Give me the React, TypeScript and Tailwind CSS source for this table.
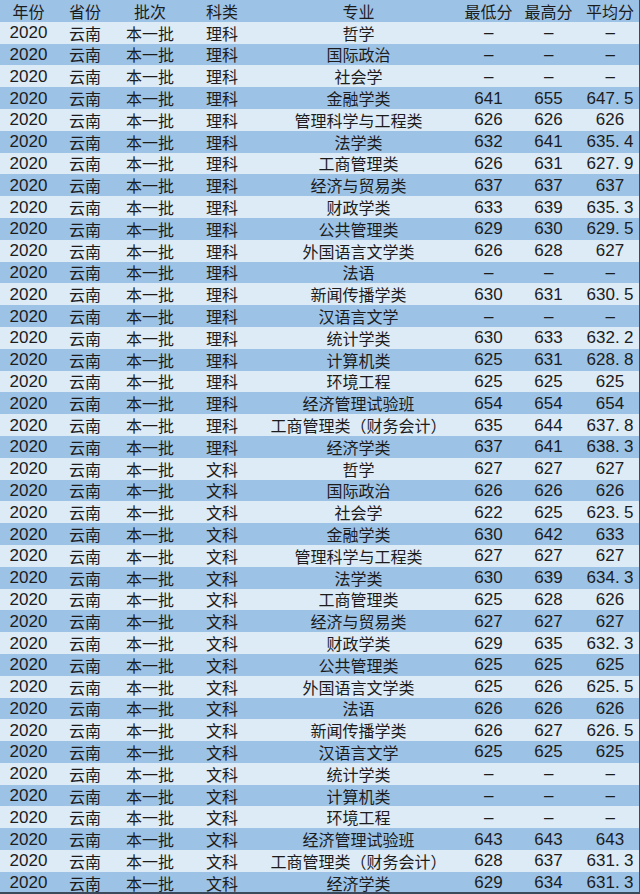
import React from 'react'

type Row = [string, string, string, string]

const LI: Row[] = [
  ['哲学', '-', '-', '-'],
  ['国际政治', '-', '-', '-'],
  ['社会学', '-', '-', '-'],
  ['金融学类', '641', '655', '647.5'],
  ['管理科学与工程类', '626', '626', '626'],
  ['法学类', '632', '641', '635.4'],
  ['工商管理类', '626', '631', '627.9'],
  ['经济与贸易类', '637', '637', '637'],
  ['财政学类', '633', '639', '635.3'],
  ['公共管理类', '629', '630', '629.5'],
  ['外国语言文学类', '626', '628', '627'],
  ['法语', '-', '-', '-'],
  ['新闻传播学类', '630', '631', '630.5'],
  ['汉语言文学', '-', '-', '-'],
  ['统计学类', '630', '633', '632.2'],
  ['计算机类', '625', '631', '628.8'],
  ['环境工程', '625', '625', '625'],
  ['经济管理试验班', '654', '654', '654'],
  ['工商管理类（财务会计）', '635', '644', '637.8'],
  ['经济学类', '637', '641', '638.3'],
]

const WEN: Row[] = [
  ['哲学', '627', '627', '627'],
  ['国际政治', '626', '626', '626'],
  ['社会学', '622', '625', '623.5'],
  ['金融学类', '630', '642', '633'],
  ['管理科学与工程类', '627', '627', '627'],
  ['法学类', '630', '639', '634.3'],
  ['工商管理类', '625', '628', '626'],
  ['经济与贸易类', '627', '627', '627'],
  ['财政学类', '629', '635', '632.3'],
  ['公共管理类', '625', '625', '625'],
  ['外国语言文学类', '625', '626', '625.5'],
  ['法语', '626', '626', '626'],
  ['新闻传播学类', '626', '627', '626.5'],
  ['汉语言文学', '625', '625', '625'],
  ['统计学类', '-', '-', '-'],
  ['计算机类', '-', '-', '-'],
  ['环境工程', '-', '-', '-'],
  ['经济管理试验班', '643', '643', '643'],
  ['工商管理类（财务会计）', '628', '637', '631.3'],
  ['经济学类', '629', '634', '631.3'],
]

const rows = [
  ...LI.map((r) => ({ kind: '理科', r })),
  ...WEN.map((r) => ({ kind: '文科', r })),
]

const cols = 'grid grid-cols-[57px_56px_74px_70px_203px_57px_63px_60px] h-[21.8px] items-center text-center leading-none'
const cjk = "font-['Noto_Sans_CJK_SC',sans-serif] text-[16px]"
const num = "font-['Liberation_Sans_Narrow','Liberation_Sans',sans-serif] text-[17px]"

function Num({ v }: { v: string }) {
  if (v === '-') return <span className={`${num} inline-block w-[9px] text-center`}>–</span>
  const [a, b] = v.split('.')
  return (
    <span className={num}>
      {a}
      {b !== undefined && (
        <>
          <span className="inline-block w-[9px] text-left">.</span>
          {b}
        </>
      )}
    </span>
  )
}

export default function App() {
  return (
    <div className="w-[640px] h-[894px] overflow-hidden text-[#1c1c1c] border-r border-b-2 border-[#3a4a5a]">
      <div className={`${cols} bg-[#9cc3e6] ${cjk}`}>
        <div>年份</div>
        <div>省份</div>
        <div>批次</div>
        <div>科类</div>
        <div>专业</div>
        <div>最低分</div>
        <div>最高分</div>
        <div>平均分</div>
      </div>
      {rows.map(({ kind, r }, i) => (
        <div key={i} className={`${cols} ${i % 2 === 0 ? 'bg-[#ddebf7]' : 'bg-[#9cc3e6]'}`}>
          <div><Num v="2020" /></div>
          <div className={cjk}>云南</div>
          <div className={cjk}>本一批</div>
          <div className={cjk}>{kind}</div>
          <div className={`${cjk} whitespace-nowrap`}>{r[0]}</div>
          <div><Num v={r[1]} /></div>
          <div><Num v={r[2]} /></div>
          <div><Num v={r[3]} /></div>
        </div>
      ))}
    </div>
  )
}
